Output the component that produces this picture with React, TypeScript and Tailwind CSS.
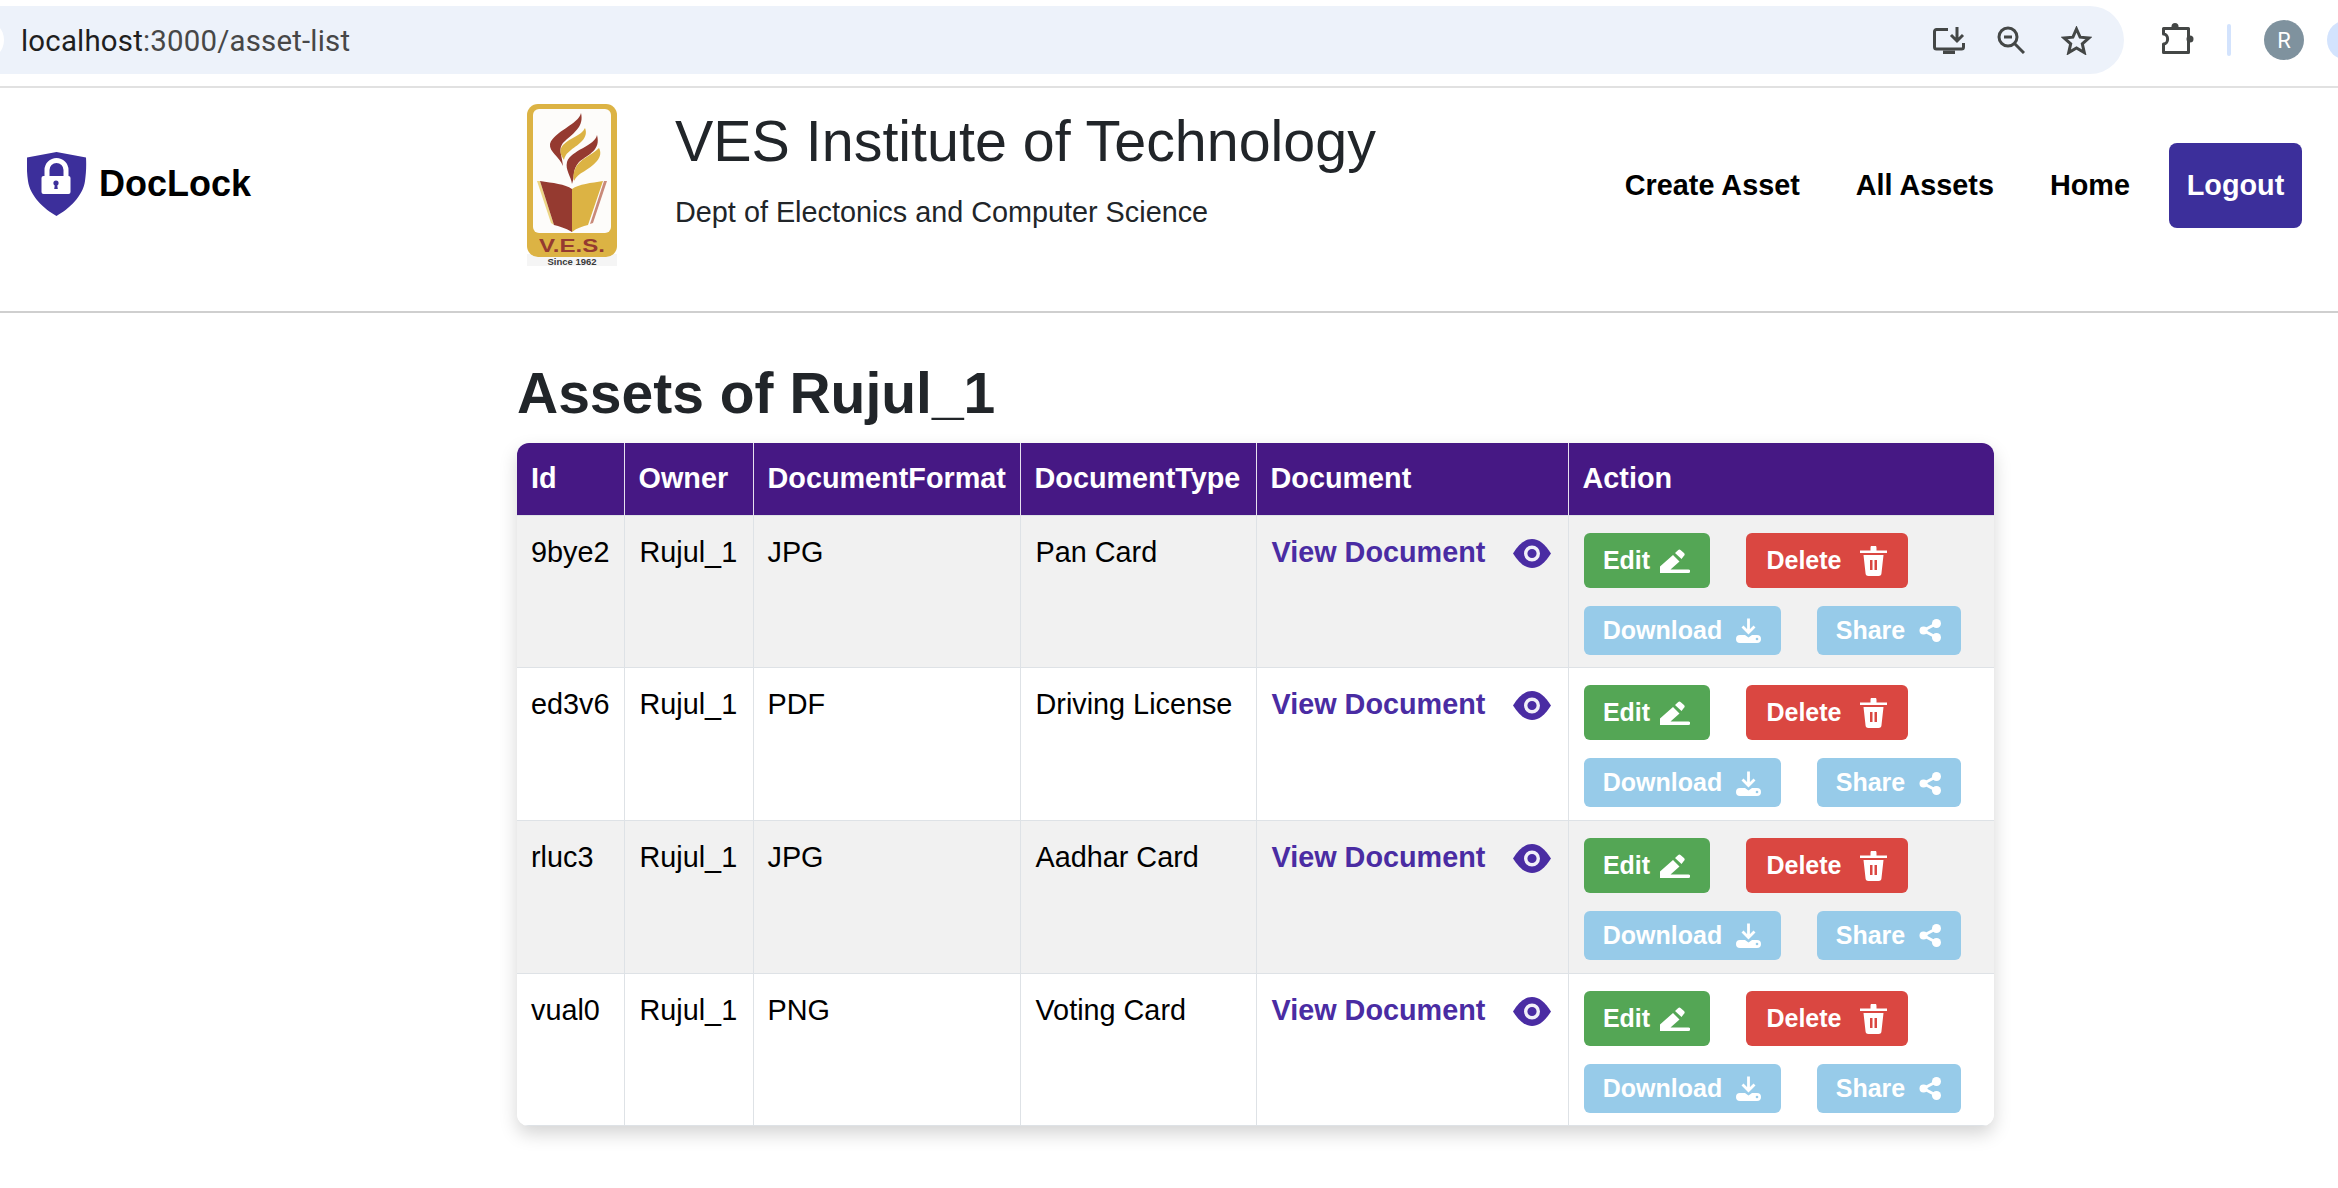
interface Asset {
  id: string;
  format: string;
  type: string;
}

const assets: Asset[] = [
  { id: "9bye2", format: "JPG", type: "Pan Card" },
  { id: "ed3v6", format: "PDF", type: "Driving License" },
  { id: "rluc3", format: "JPG", type: "Aadhar Card" },
  { id: "vual0", format: "PNG", type: "Voting Card" },
];

const headers = ["Id", "Owner", "DocumentFormat", "DocumentType", "Document", "Action"];

function BrowserBar() {
  return (
    <div className="flex h-[88px] items-start overflow-hidden border-b-2 border-[#e1e1e1] pt-[6px]">
      <div className="flex h-[68px] w-[2124px] shrink-0 items-center rounded-r-[34px] bg-[#edf2fa]">
        <div className="-ml-[36px] h-[40px] w-[40px] shrink-0 rounded-full bg-white" />
        <div className="ml-[17px] pt-[2px] text-[29.4px] tracking-[0.2px] text-[#474747] [font-family:Roboto,sans-serif]">
          <span className="text-[#1f1f1f]">localhost</span>:3000/asset-list
        </div>
        <div className="ml-auto mr-[32px] flex items-center gap-[34px]">
          <svg width="32" height="27" viewBox="0 0 32 27" fill="none" stroke="#444746" strokeWidth="3">
            <path d="M15 2.5H3.5a2 2 0 0 0-2 2V20a2 2 0 0 0 2 2h25a2 2 0 0 0 2-2v-4" />
            <path d="M10 25.5h12" strokeWidth="4" />
            <path d="M24 0v13M18 8l6 6 6-6" />
          </svg>
          <svg width="28" height="28" viewBox="0 0 28 28" fill="none" stroke="#444746" strokeWidth="3" className="-ml-[2px] mr-[2px]">
            <circle cx="11" cy="11" r="9" />
            <path d="M7 11h8" />
            <path d="M17.5 17.5L27 27" />
          </svg>
          <svg width="31" height="29" viewBox="0 0 31 29" fill="none" stroke="#444746" strokeWidth="3">
            <path d="M15.5 3l3.6 8.2 8.9.8-6.7 5.9 2 8.7-7.8-4.6-7.8 4.6 2-8.7L3 12l8.9-.8z" />
          </svg>
        </div>
      </div>
      <div className="ml-[38px] mt-[14px] flex shrink-0 items-center">
        <svg width="32" height="31" viewBox="0 0 32 31" fill="none" stroke="#444746" strokeWidth="3" className="-mt-[4px]">
          <path d="M1.5 5.5h25v24h-25v-8.5c5.500 0 5.500-10 0-10z" strokeLinejoin="round" />
          <circle cx="13" cy="3.5" r="3.5" fill="#444746" stroke="none" />
          <circle cx="28" cy="16" r="3.5" fill="#444746" stroke="none" />
        </svg>
        <div className="ml-[33px] h-[32px] w-[4px] rounded-full bg-[#d3e3fd]" />
        <div className="ml-[33px] flex h-[40px] w-[40px] items-center justify-center rounded-full bg-[#7f929e] text-[22px] text-white [font-family:Roboto,sans-serif]">
          R
        </div>
        <div className="ml-[23px] h-[40px] w-[40px] rounded-full bg-[#d3e3fd]" />
      </div>
    </div>
  );
}

function ShieldLogo() {
  return (
    <svg width="60" height="64" viewBox="0 0 60 64">
      <path d="M29.5 0L59 5.5C59.5 14 59 22 58 29C56 44 42 57 29.5 64C17 57 3 44 1 29C0 22 -0.5 14 0 5.5Z" fill="#3c2f9b" />
      <path d="M20 25V18a9.500 9.500 0 0 1 19 0v7" fill="none" stroke="#fff" strokeWidth="5" />
      <rect x="14.500" y="24" width="29" height="18" rx="2" fill="#fff" />
      <circle cx="29" cy="31" r="2.600" fill="#3c2f9b" />
      <path d="M28 32h2l.8 5h-3.600z" fill="#3c2f9b" />
    </svg>
  );
}

function VesLogo() {
  return (
    <svg width="90" height="162" viewBox="0 0 90 162" className="shrink-0">
      <rect x="0" y="150" width="90" height="12" fill="#f5f5f5" />
      <rect x="0" y="0" width="90" height="153" rx="11" fill="#dcb344" />
      <rect x="6" y="5" width="78" height="124" rx="6" fill="#fdfcfa" />
      <path d="M54 9C52 20 26 28 23 40C22 48 32 52 36 62C35 50 30 44 38 37C48 28 57 22 54 9Z" fill="#953a30" />
      <path d="M58 24C62 34 52 40 44 46C39 50 38 52 37 56C33 50 32 46 36 41C44 33 54 32 58 24Z" fill="#dcb344" />
      <path d="M70 31C68 42 44 46 40 58C38 66 44 72 45 80C48 72 45 66 52 58C62 50 74 46 70 31Z" fill="#953a30" />
      <path d="M72 44C64 52 52 55 48 65C46 70 46 74 47 77C51 68 62 67 70 57C74 52 74 48 72 44Z" fill="#dcb344" />
      <path d="M10 77L13 77L27 121L24 119Z" fill="#ecd585" />
      <path d="M13 77C26 79 38 80 45 85V128C38 124 32 122 27 121Z" fill="#953a30" />
      <path d="M45 85C52 80 64 79 76 77L61 121C56 122 50 124 45 128Z" fill="#dcb344" />
      <path d="M77 77L80 77L66 119L63 120Z" fill="#c98a7a" />
      <text x="45" y="148" textAnchor="middle" fontSize="19" fontWeight="700" fill="#953a30" textLength="66" lengthAdjust="spacingAndGlyphs" className="[font-family:'Liberation_Sans',sans-serif]">
        V.E.S.
      </text>
      <text x="45" y="161" textAnchor="middle" fontSize="9.500" fontWeight="700" fill="#3a3a3a" className="[font-family:'Liberation_Sans',sans-serif]">
        Since 1962
      </text>
    </svg>
  );
}

function SiteHeader() {
  return (
    <header className="flex h-[225px] items-start border-b-2 border-[#cfcfcf] bg-white">
      <div className="ml-[27px] mt-[64px] flex items-center">
        <ShieldLogo />
        <span className="ml-[12px] text-[36px] font-bold text-black">DocLock</span>
      </div>
      <div className="ml-[276px] mt-[16px] flex">
        <VesLogo />
        <div className="ml-[58px]">
          <div className="pt-[3px] text-[57.4px] leading-[68px] text-[#212529]">VES Institute of Technology</div>
          <div className="mt-[20px] text-[28.8px] leading-[34px] text-[#212529]">Dept of Electonics and Computer Science</div>
        </div>
      </div>
      <nav className="ml-auto mr-[36px] mt-[55px] flex items-center text-[28.8px] font-bold text-black">
        <a className="mr-[56px]">Create Asset</a>
        <a className="mr-[56px]">All Assets</a>
        <a className="mr-[39px]">Home</a>
        <a className="flex h-[85px] w-[133px] items-center justify-center rounded-[8px] bg-[#3c2f9b] text-white">Logout</a>
      </nav>
    </header>
  );
}

function EyeIcon() {
  return (
    <svg width="38" height="29" viewBox="0 0 38 29" className="mr-[2px] mt-[3px] shrink-0">
      <path d="M0 14.500C6 5 12 0 19 0C26 0 32 5 38 14.500C32 24 26 29 19 29C12 29 6 24 0 14.500Z" fill="#4a2ca3" />
      <circle cx="19" cy="14.500" r="6.300" fill="#4a2ca3" stroke="#f1eff8" strokeWidth="3.400" />
    </svg>
  );
}

function EditIcon() {
  return (
    <svg width="30" height="24" viewBox="0 0 30 24" fill="#fff">
      <path d="M0 24V17.500L13 6L19.500 12.500L10.500 20.500H28.500a1.700 1.700 0 0 1 0 3.500Z" />
      <path d="M15 4L18 1.300a2 2 0 0 1 2.800 0L24 4a2 2 0 0 1 0 2.800L21.500 10Z" />
    </svg>
  );
}

function TrashIcon() {
  return (
    <svg width="27" height="30" viewBox="0 0 27 30" fill="#fff">
      <path d="M0 4.500H10.500V2a3 3 0 0 1 6 0V4.500H27V7H0Z" />
      <path fillRule="evenodd" d="M3.500 9H23.500L21.500 27a3 3 0 0 1-3 3H8.500a3 3 0 0 1-3-3ZM10 14V24H12.500V14ZM14.500 14V24H17V14Z" />
    </svg>
  );
}

function DownloadIcon() {
  return (
    <svg width="25" height="25" viewBox="0 0 25 25">
      <path d="M12.500 0.500V14M6.500 8.500L12.500 14.500L18.500 8.500" fill="none" stroke="#fff" strokeWidth="2.800" />
      <path d="M4 17H9L12.500 19.500L16 17H21a4 4 0 0 1 0 8H4a4 4 0 0 1 0-8Z" fill="#fff" />
      <circle cx="21" cy="21" r="1.300" fill="#97cbe9" />
    </svg>
  );
}

function ShareIcon() {
  return (
    <svg width="22" height="23" viewBox="0 0 22 23" fill="#fff" stroke="#fff">
      <path d="M4.500 11.500L17.500 4.500M4.500 11.500L17.500 18.500" strokeWidth="3" fill="none" />
      <circle cx="4.500" cy="11.500" r="4" stroke="none" />
      <circle cx="17.500" cy="4.500" r="4.500" stroke="none" />
      <circle cx="17.500" cy="18.500" r="4.500" stroke="none" />
    </svg>
  );
}

function ActionButtons() {
  return (
    <div className="flex flex-col gap-[18px] text-[25px] font-bold text-white">
      <div className="flex gap-[36px]">
        <button className="flex h-[55px] w-[126px] items-center justify-center gap-[10px] rounded-[6px] bg-[#54a655] pt-[1px]">
          Edit
          <EditIcon />
        </button>
        <button className="flex h-[55px] w-[162px] items-center justify-center gap-[18px] rounded-[6px] bg-[#da4741] pt-[1px]">
          Delete
          <TrashIcon />
        </button>
      </div>
      <div className="flex gap-[36px]">
        <button className="flex h-[49px] w-[197px] items-center justify-center gap-[14px] rounded-[6px] bg-[#97cbe9] pt-[1px]">
          Download
          <DownloadIcon />
        </button>
        <button className="flex h-[49px] w-[144px] items-center justify-center gap-[14px] rounded-[6px] bg-[#97cbe9] pt-[1px]">
          Share
          <ShareIcon />
        </button>
      </div>
    </div>
  );
}

function AssetTable() {
  return (
    <div className="w-[1477px] overflow-hidden rounded-[12px] shadow-[0_8px_18px_rgba(0,0,0,0.17)]">
      <table className="w-full table-fixed border-collapse text-[28.8px] text-black">
        <colgroup>
          <col className="w-[107px]" />
          <col className="w-[129px]" />
          <col className="w-[267px]" />
          <col className="w-[236px]" />
          <col className="w-[312px]" />
          <col className="w-[426px]" />
        </colgroup>
        <thead>
          <tr className="h-[72px] bg-[#461884] text-left font-bold text-white">
            {headers.map((header) => (
              <th key={header} className="border-l border-[#e6e0ee] px-[14px] first:border-l-0">
                {header}
              </th>
            ))}
          </tr>
        </thead>
        <tbody>
          {assets.map((asset, index) => (
            <tr key={asset.id} className={index % 2 === 0 ? "h-[152.7px] bg-[#f1f1f1]" : "h-[152.7px] bg-white"}>
              <td className="border border-l-0 border-[#dee2e6] px-[14px] pt-[16px] align-top leading-[40px]">{asset.id}</td>
              <td className="border border-[#dee2e6] px-[15px] pt-[16px] align-top leading-[40px]">Rujul_1</td>
              <td className="border border-[#dee2e6] px-[14px] pt-[16px] align-top leading-[40px]">{asset.format}</td>
              <td className="border border-[#dee2e6] px-[15px] pt-[16px] align-top leading-[40px]">{asset.type}</td>
              <td className="border border-[#dee2e6] px-[15px] pt-[16px] align-top leading-[40px]">
                <div className="flex items-center justify-between">
                  <a className="font-bold text-[#4a2ca3]">View Document</a>
                  <EyeIcon />
                </div>
              </td>
              <td className="border border-r-0 border-[#dee2e6] px-[15px] pt-[17px] align-top">
                <ActionButtons />
              </td>
            </tr>
          ))}
        </tbody>
      </table>
    </div>
  );
}

export default function App() {
  return (
    <div className="h-[1188px] overflow-hidden bg-white [font-family:'Liberation_Sans',Arial,sans-serif]">
      <BrowserBar />
      <SiteHeader />
      <main className="ml-[517px] pt-[46px]">
        <h2 className="mb-[16px] text-[57px] font-bold leading-[68px] text-[#212529]">Assets of Rujul_1</h2>
        <AssetTable />
      </main>
    </div>
  );
}
